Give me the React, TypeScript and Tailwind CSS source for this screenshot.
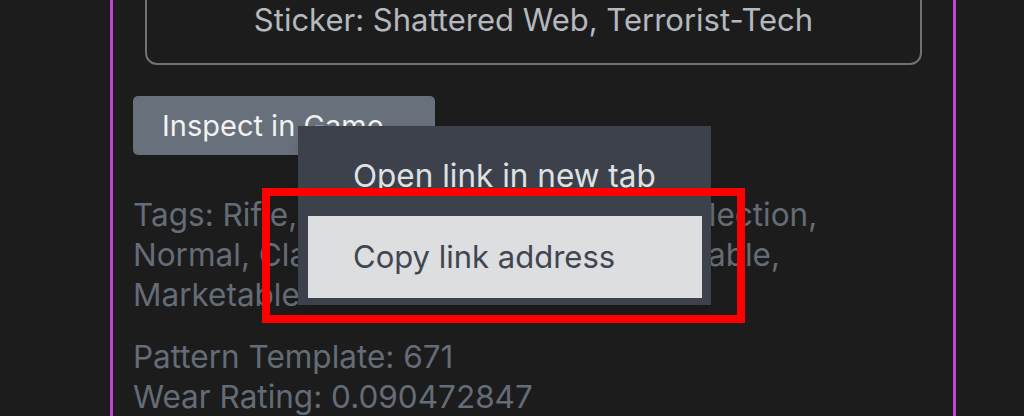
export default function App() {
  return (
    <div className="relative h-[416px] w-[1024px] overflow-hidden bg-[#1c1c1d] font-['Inter',sans-serif]">
      <div className="ml-[110px] flex h-full w-[846px] flex-col border-x-[3px] border-[#c63fd8] pl-[20px] pr-[31px]">
        <div className="-mt-[40px] ml-[12px] h-[105px] shrink-0 rounded-[12px] border-2 border-[#707172] pt-[38px] text-center text-[31px] leading-[40px] text-[#b4b9bf]">
          Sticker: Shattered Web, Terrorist-Tech
        </div>

        <button className="mt-[31px] flex h-[59px] w-[302px] shrink-0 items-center self-start rounded-[5px] bg-[#67707b] pl-[29px] text-[29px] text-[#f2f2f2]">
          Inspect in Game
        </button>

        <p className="mt-[40px] w-[790px] text-[31.5px] leading-[40px] text-[#646c76]">
          Tags: Rifle, SCAR-20, The Fracture Collection, Normal, Classified, Minimal Wear, Tradable, Marketable
        </p>

        <div className="mt-[22px] text-[31.5px] leading-[40px] text-[#646c76]">
          <p>Pattern Template: 671</p>
          <p>Wear Rating: 0.090472847</p>
        </div>
      </div>

      {/* context menu */}
      <div className="absolute left-[298px] top-[126px] w-[413px] bg-[#3c414b] pb-[7px] pl-[10px] pr-[9px] pt-[10px] shadow-lg">
        <div className="flex h-[80px] items-center pl-[45px] text-[31.5px] text-[#dfe1e3]">Open link in new tab</div>
        <div className="flex h-[82px] items-center bg-[#dcdedf] pl-[45px] text-[31px] text-[#3f4651]">Copy link address</div>
      </div>

      <div className="absolute left-[262px] top-[188px] h-[135px] w-[483px] border-[8px] border-[#ff0000]" />
    </div>
  )
}
